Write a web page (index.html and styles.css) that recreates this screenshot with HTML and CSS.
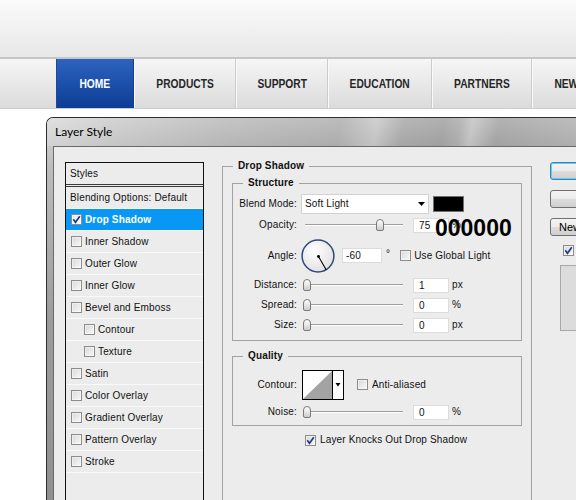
FILE: index.html
```html
<!DOCTYPE html>
<html>
<head>
<meta charset="utf-8">
<title>Layer Style</title>
<link rel="stylesheet" href="styles.css">
</head>
<body>
<header class="top"></header>
<nav class="nav">
  <a class="nav-item active"><span>HOME</span></a>
  <a class="nav-item"><span>PRODUCTS</span></a>
  <a class="nav-item"><span>SUPPORT</span></a>
  <a class="nav-item"><span>EDUCATION</span></a>
  <a class="nav-item"><span>PARTNERS</span></a>
  <a class="nav-item"><span>NEWS</span></a>
</nav>
<div class="dialog">
  <div class="titlebar">Layer Style</div>
  <div class="client">
    <div class="styles-list">
      <div class="list-head">Styles</div>
      <div class="list-row plain">Blending Options: Default</div>
      <div class="list-row selected"><span class="cb white"><svg width="9" height="9" viewBox="0 0 9 9"><path d="M1.3 4.3 L3.5 7.2 L7.8 1.2" fill="none" stroke="#1f3b85" stroke-width="1.7"/></svg></span><span>Drop Shadow</span></div>
      <div class="list-row"><span class="cb"></span><span>Inner Shadow</span></div>
      <div class="list-row"><span class="cb"></span><span>Outer Glow</span></div>
      <div class="list-row"><span class="cb"></span><span>Inner Glow</span></div>
      <div class="list-row"><span class="cb"></span><span>Bevel and Emboss</span></div>
      <div class="list-row sub"><span class="cb"></span><span>Contour</span></div>
      <div class="list-row sub"><span class="cb"></span><span>Texture</span></div>
      <div class="list-row"><span class="cb"></span><span>Satin</span></div>
      <div class="list-row"><span class="cb"></span><span>Color Overlay</span></div>
      <div class="list-row"><span class="cb"></span><span>Gradient Overlay</span></div>
      <div class="list-row"><span class="cb"></span><span>Pattern Overlay</span></div>
      <div class="list-row"><span class="cb"></span><span>Stroke</span></div>
    </div>

    <fieldset class="group ds">
      <legend>Drop Shadow</legend>
      <fieldset class="group structure">
        <legend>Structure</legend>
        <div class="row row-blend">
          <span class="lbl">Blend Mode:</span>
          <div class="select"><span>Soft Light</span><svg width="7" height="4" viewBox="0 0 7 4"><polygon points="0,0 7,0 3.5,4" fill="#000"/></svg></div>
          <div class="swatch"></div>
        </div>
        <div class="row row-opacity">
          <span class="lbl">Opacity:</span>
          <div class="slider"><div class="track"></div><div class="thumb" style="left:73px"></div></div>
          <div class="num">75</div><span class="unit">%</span>
          <span class="hex">000000</span>
        </div>
        <div class="row row-angle">
          <span class="lbl">Angle:</span>
          <svg class="dial" width="34" height="34" viewBox="0 0 34 34">
            <defs><radialGradient id="dg" cx="40%" cy="35%" r="70%"><stop offset="0" stop-color="#ffffff"/><stop offset="1" stop-color="#e0e0e0"/></radialGradient></defs>
            <circle cx="17" cy="17" r="15.9" fill="url(#dg)" stroke="#2d4a78" stroke-width="1.5"/>
            <line x1="17.5" y1="17.5" x2="25.3" y2="31" stroke="#000" stroke-width="1.1"/>
            <circle cx="17.5" cy="17.5" r="1.4" fill="#000"/>
          </svg>
          <div class="num angle">-60</div>
          <span class="deg">°</span>
          <span class="cb global"></span><span class="cb-text">Use Global Light</span>
        </div>
        <div class="row row-slider">
          <span class="lbl">Distance:</span>
          <div class="slider"><div class="track"></div><div class="thumb" style="left:0px"></div></div>
          <div class="num">1</div><span class="unit">px</span>
        </div>
        <div class="row row-slider">
          <span class="lbl">Spread:</span>
          <div class="slider"><div class="track"></div><div class="thumb" style="left:0px"></div></div>
          <div class="num">0</div><span class="unit">%</span>
        </div>
        <div class="row row-slider">
          <span class="lbl">Size:</span>
          <div class="slider"><div class="track"></div><div class="thumb" style="left:0px"></div></div>
          <div class="num">0</div><span class="unit">px</span>
        </div>
      </fieldset>

      <fieldset class="group quality">
        <legend>Quality</legend>
        <div class="row row-contour">
          <span class="lbl">Contour:</span>
          <svg class="contour" width="42" height="30" viewBox="0 0 42 30">
            <rect x="0.5" y="0.5" width="41" height="29" fill="#fff" stroke="#000"/>
            <polygon points="1,29 30,1 30,29" fill="#a3a3a3"/>
            <line x1="30.5" y1="0" x2="30.5" y2="30" stroke="#000"/>
            <polygon points="33.5,13 38.5,13 36,16.5" fill="#000"/>
          </svg>
          <span class="cb aa"></span><span class="cb-text wide">Anti-aliased</span>
        </div>
        <div class="row row-slider">
          <span class="lbl">Noise:</span>
          <div class="slider"><div class="track"></div><div class="thumb" style="left:0px"></div></div>
          <div class="num">0</div><span class="unit">%</span>
        </div>
      </fieldset>

      <div class="row row-knock">
        <span class="cb"><svg width="9" height="9" viewBox="0 0 9 9"><path d="M1.3 4.3 L3.5 7.2 L7.8 1.2" fill="none" stroke="#1f3b85" stroke-width="1.7"/></svg></span>
        <span class="cb-text wide">Layer Knocks Out Drop Shadow</span>
      </div>
    </fieldset>

    <div class="side">
      <div class="btn ok">OK</div>
      <div class="btn">Cancel</div>
      <div class="btn new">New Style...</div>
      <span class="cb preview-cb"><svg width="9" height="9" viewBox="0 0 9 9"><path d="M1.3 4.3 L3.5 7.2 L7.8 1.2" fill="none" stroke="#1f3b85" stroke-width="1.7"/></svg></span>
      <div class="preview"></div>
    </div>
  </div>
</div>
</body>
</html>
```
FILE: styles.css
```css
* { box-sizing: border-box; }
html, body { margin: 0; padding: 0; }
body {
  width: 576px;
  height: 500px;
  overflow: hidden;
  background: #ffffff;
  font-family: "Liberation Sans", Arial, sans-serif;
}

/* page header + navigation */
.top {
  height: 59px;
  background: linear-gradient(#fbfbfb, #e7e7e7);
  border-bottom: 2px solid #c6c6c6;
}
.nav {
  display: flex;
  height: 50px;
  padding-left: 56px;
  background: linear-gradient(#f6f6f6, #dbdbdb);
  border-bottom: 1px solid #cdcdcd;
}
.nav-item {
  flex: none;
  display: flex;
  align-items: center;
  justify-content: center;
  height: 49px;
  font-family: "Liberation Sans", Arial, sans-serif;
  font-weight: bold;
  font-size: 12.5px;
  color: #262626;
  border-left: 1px solid #fafafa;
  border-right: 1px solid #cbcbcb;
  white-space: nowrap;
}
.nav-item span {
  display: inline-block;
  transform: scaleX(0.82);
}
.nav-item:nth-child(1) { width: 78px; }
.nav-item:nth-child(2) { width: 102px; }
.nav-item:nth-child(3) { width: 92px; }
.nav-item:nth-child(4) { width: 104px; }
.nav-item:nth-child(5) { width: 100px; }
.nav-item:nth-child(6) { width: 100px; justify-content: flex-start; padding-left: 18px; }
.nav-item.active {
  color: #ffffff;
  background: linear-gradient(#2d63be, #0d3d96);
  border-left: 1px solid #1a4a9e;
  border-right: 1px solid #123f90;
}

/* dialog window */
.dialog {
  margin: 8px 0 0 46px;
  width: 560px;
  height: 420px;
  border: 1px solid #2e2e2e;
  border-right: 0;
  border-bottom: 0;
  border-radius: 7px 0 0 0;
  background: linear-gradient(#d6d6d6 0, #bcbcbc 50px, #9c9c9c 200px, #8e8e8e);
}
.titlebar {
  height: 28px;
  line-height: 28px;
  padding-left: 8px;
  font-family: Lato, "Liberation Sans", sans-serif;
  font-size: 12px;
  color: #000;
  border-radius: 6px 0 0 0;
  background:
    linear-gradient(rgba(255,255,255,0.12), rgba(0,0,0,0.04)),
    linear-gradient(100deg, #dcdcdc 0px, #cfcfcf 60px, #bdbdbd 180px, #b3b3b3 290px, #cacaca 326px, #adadad 352px, #a6a6a6 392px, #b1b1b1 408px, #c7c7c7 420px, #a8a8a8 446px, #b6b6b6 529px);
}
.client {
  margin-left: 6px;
  height: 400px;
  border-top: 1px solid #6a6a6a;
  border-left: 1px solid #6a6a6a;
  background: #ececec;
  display: flex;
  align-items: flex-start;
  padding: 15px 0 0 11px;
  font-size: 10px;
  letter-spacing: 0.15px;
  color: #111;
}

/* styles list */
.styles-list {
  flex: none;
  width: 139px;
  height: 360px;
  border: 1px solid #111;
  border-bottom: 0;
}
.list-head {
  height: 24px;
  line-height: 21px;
  padding-left: 4px;
  border-bottom: 3px double #3a3a3a;
}
.list-row {
  display: flex;
  align-items: center;
  gap: 3px;
  height: 22px;
  padding-left: 5px;
  border-bottom: 1px solid #f9f9f9;
  white-space: nowrap;
}
.list-row.plain { padding-left: 4px; }
.list-row.sub { padding-left: 18px; }
.list-row.selected {
  background: #0897f4;
  color: #fff;
  font-weight: bold;
}

/* checkboxes */
.cb {
  flex: none;
  display: inline-flex;
  align-items: center;
  justify-content: center;
  width: 11px;
  height: 11px;
  border: 1px solid #8c8c8c;
  background: linear-gradient(135deg, #d9d9d9, #f8f8f8);
  box-shadow: inset 0 0 0 1px rgba(255,255,255,0.45);
}
.cb svg { display: block; }
.cb.white { background: linear-gradient(135deg, #e6e6e6, #ffffff); }
.cb-text { margin-left: 3px; white-space: nowrap; }
.cb-text.wide { margin-left: 4px; }

/* group boxes */
fieldset.group {
  margin: 0;
  padding: 0;
  border: 1px solid #a2a2a2;
  min-width: 0;
}
fieldset.group legend {
  padding: 0 5px;
  margin-left: 1px;
  font-weight: bold;
  font-size: 10px;
  line-height: 12px;
}
fieldset.ds {
  flex: none;
  width: 310px;
  height: 360px;
  margin: -2px 0 0 18px;
  padding: 5px 9px 0 9px;
}
fieldset.structure { padding: 4px 9px 5px 9px; }
fieldset.quality { margin-top: 9px; padding: 5px 9px 3px 9px; }

.row {
  display: flex;
  align-items: center;
  position: relative;
  line-height: 12px;
}
.row-blend { height: 21px; }
.row-opacity { height: 22px; }
.row-angle { height: 39px; }
.row-slider { height: 20px; }
.row-contour { height: 35px; }
.row-knock { height: 16px; margin-top: 6px; padding-left: 73px; }

.lbl {
  flex: none;
  width: 55px;
  display: flex;
  justify-content: flex-end;
  white-space: nowrap;
}

.select {
  flex: none;
  margin-left: 4px;
  width: 128px;
  height: 20px;
  background: #fff;
  border: 1px solid #d2d2d2;
  display: flex;
  align-items: center;
  justify-content: space-between;
  padding: 0 3px;
}
.swatch {
  flex: none;
  margin-left: 4px;
  width: 31px;
  height: 16px;
  background: #000;
  border: 1px solid #707070;
}

.slider {
  flex: none;
  position: relative;
  margin-left: 6px;
  width: 100px;
  height: 14px;
}
.track {
  margin: 6px 0 0 2px;
  height: 2px;
  border-top: 1px solid #9e9e9e;
  border-bottom: 1px solid #ffffff;
}
.thumb {
  position: absolute;
  top: 1px;
  width: 8px;
  height: 12px;
  border: 1px solid #7a7a7a;
  border-radius: 4px 4px 2px 2px;
  background: linear-gradient(#ffffff, #cdcdcd);
}
.num {
  flex: none;
  margin-left: 10px;
  width: 36px;
  height: 15px;
  background: #fff;
  border: 1px solid #dcdcdc;
  padding-left: 5px;
  line-height: 13px;
}
.unit { margin-left: 3px; }
.hex {
  position: absolute;
  left: 193px;
  top: 3px;
  font: bold 23px/23px "Liberation Sans", Arial, sans-serif;
  letter-spacing: 0;
  color: #000;
}

.dial { flex: none; margin-left: 4px; display: block; }
.num.angle { margin-left: 7px; width: 40px; padding-left: 3px; }
.deg { margin-left: 4px; align-self: flex-start; margin-top: 12px; }
.cb.global { margin-left: 10px; }

.contour { flex: none; margin-left: 5px; display: block; }
.cb.aa { margin-left: 13px; }

/* right side buttons */
.side {
  flex: none;
  margin-left: 18px;
  width: 100px;
  display: flex;
  flex-direction: column;
  align-items: flex-start;
}
.btn {
  width: 96px;
  height: 18px;
  border: 1px solid #707070;
  border-radius: 3px;
  background: linear-gradient(#f3f3f3, #ebebeb 50%, #dddddd 50%, #cfcfcf);
  font-size: 11px;
  line-height: 16px;
  text-align: center;
  color: #000;
  letter-spacing: 0;
  white-space: nowrap;
}
.btn + .btn { margin-top: 10px; }
.btn.ok {
  border-color: #3c7fb1;
  box-shadow: inset 0 0 0 1px #5fd0fb;
}
.btn.new { text-align: left; padding-left: 8px; }
.preview-cb { margin: 9px 0 0 13px; }
.preview {
  margin: 9px 0 0 10px;
  width: 90px;
  height: 66px;
  background: #dcdcdc;
  border: 1px solid #a8a8a8;
}
```
